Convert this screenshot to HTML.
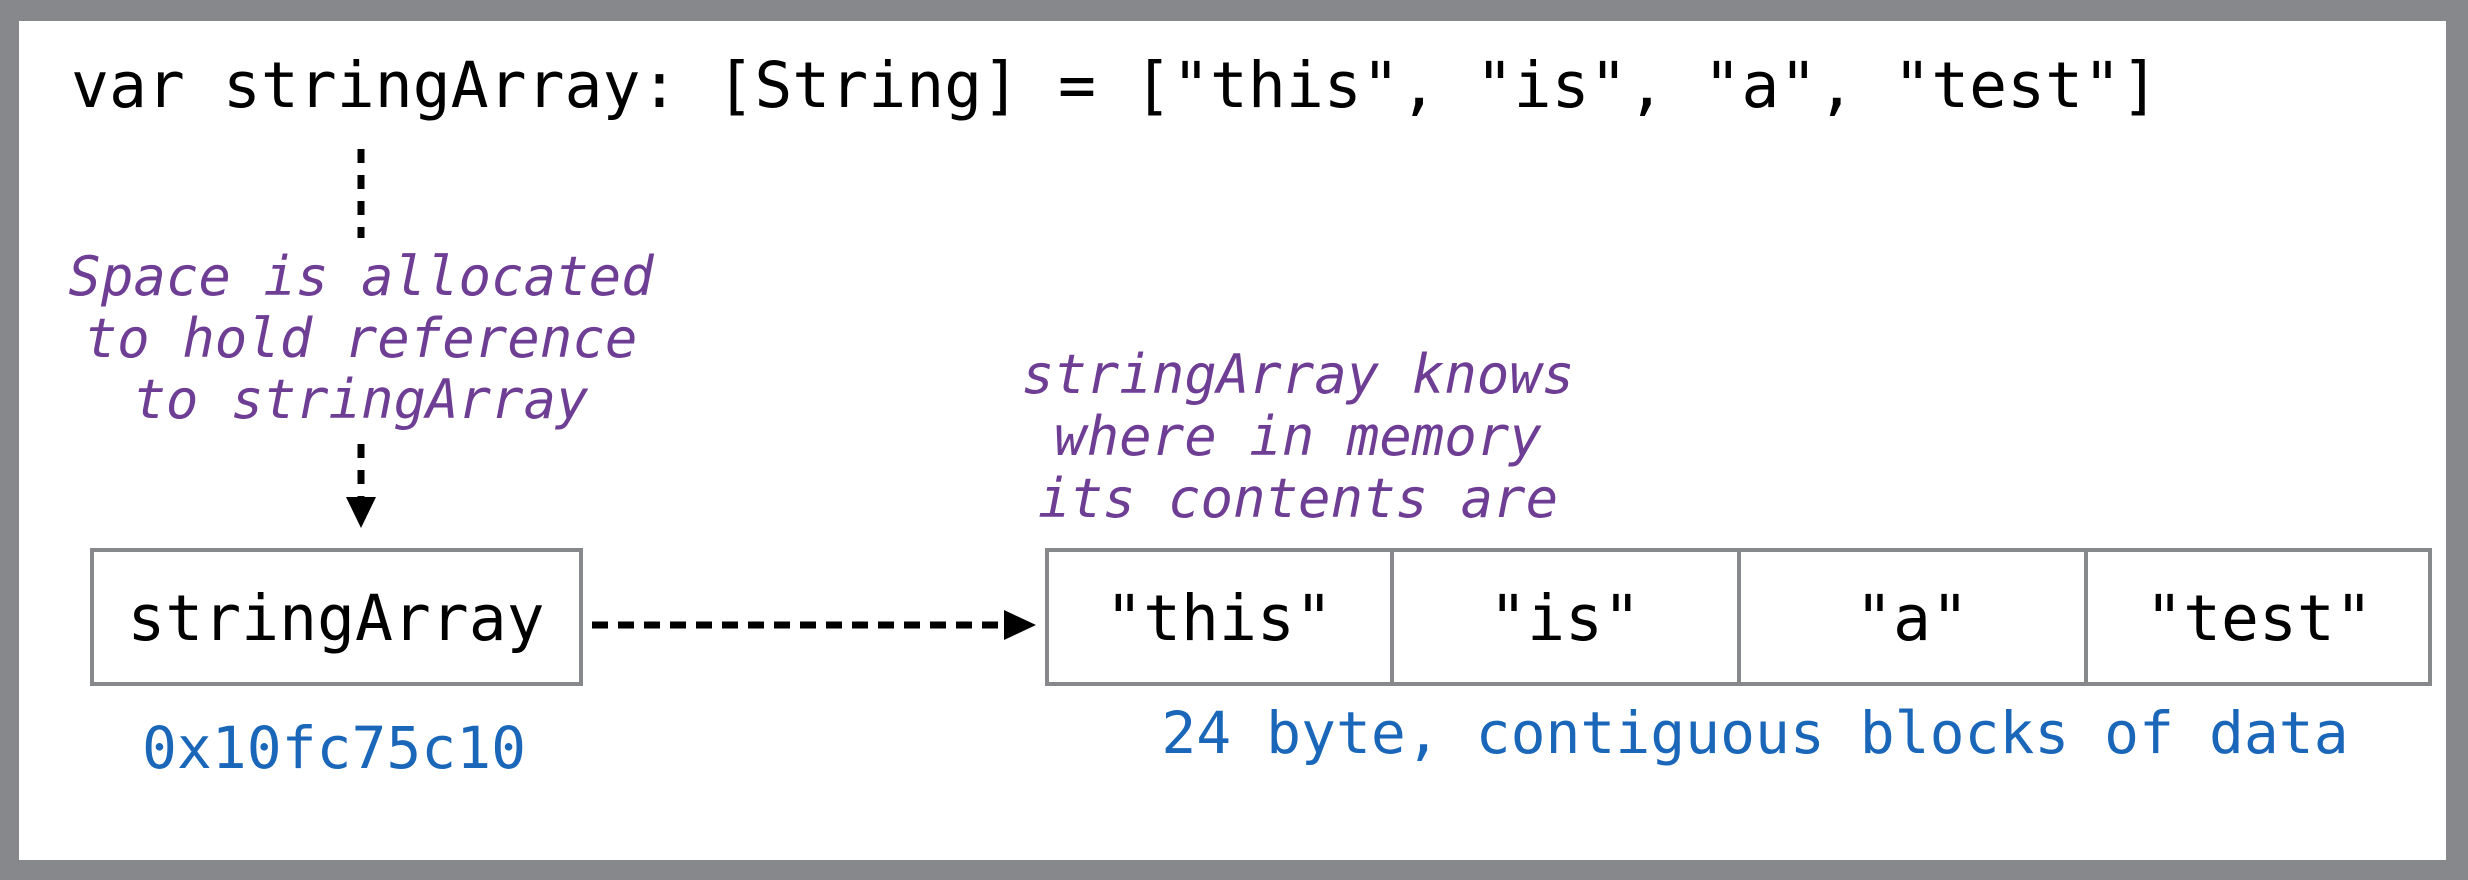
<!DOCTYPE html>
<html><head><meta charset="utf-8"><style>
html,body{margin:0;padding:0;background:#fff;}
svg{display:block;}
text{font-family:"DejaVu Sans Mono","Liberation Mono",monospace;}
</style></head><body>
<svg width="2468" height="880" viewBox="0 0 2468 880" xmlns="http://www.w3.org/2000/svg">
<rect x="0" y="0" width="2468" height="880" fill="#86888c"/>
<rect x="19" y="21" width="2427" height="839" fill="#fff"/>
<text x="71" y="107" font-size="63" fill="#000" textLength="2088" lengthAdjust="spacingAndGlyphs">var stringArray: [String] = ["this", "is", "a", "test"]</text>
<line x1="361" y1="149" x2="361" y2="238" stroke="#000" stroke-width="7" stroke-dasharray="14,12"/>
<g font-size="54" font-style="italic" fill="#6e3d94" text-anchor="middle">
<text x="361" y="295">Space is allocated</text>
<text x="361" y="357">to hold reference</text>
<text x="361" y="418">to stringArray</text>
<text x="1298" y="393">stringArray knows</text>
<text x="1298" y="455">where in memory</text>
<text x="1298" y="517">its contents are</text>
</g>
<line x1="361" y1="444" x2="361" y2="497" stroke="#000" stroke-width="7" stroke-dasharray="14,12"/>
<polygon points="346,497 376,497 361,528" fill="#000"/>
<rect x="92" y="550" width="489" height="134" fill="none" stroke="#86888c" stroke-width="4"/>
<text x="336" y="640" font-size="63" text-anchor="middle">stringArray</text>
<text x="334" y="768" font-size="58" fill="#1a66b8" text-anchor="middle">0x10fc75c10</text>
<line x1="592" y1="625" x2="1006" y2="625" stroke="#000" stroke-width="7" stroke-dasharray="16,10"/>
<polygon points="1004,610 1036,625 1004,640" fill="#000"/>
<rect x="1047" y="550" width="1383" height="134" fill="none" stroke="#86888c" stroke-width="4"/>
<line x1="1392" y1="550" x2="1392" y2="684" stroke="#86888c" stroke-width="4"/>
<line x1="1739" y1="550" x2="1739" y2="684" stroke="#86888c" stroke-width="4"/>
<line x1="2086" y1="550" x2="2086" y2="684" stroke="#86888c" stroke-width="4"/>
<g font-size="63" text-anchor="middle">
<text x="1219" y="640">"this"</text>
<text x="1565" y="640">"is"</text>
<text x="1912" y="640">"a"</text>
<text x="2259" y="640">"test"</text>
</g>
<text x="1755" y="753" font-size="58" fill="#1a66b8" text-anchor="middle">24 byte, contiguous blocks of data</text>
</svg>
</body></html>
